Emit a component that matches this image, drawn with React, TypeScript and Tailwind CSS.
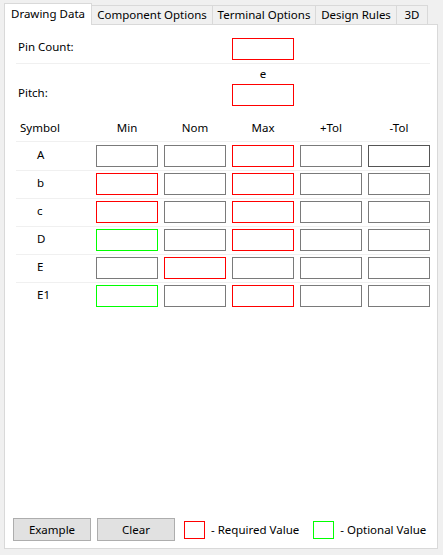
import React from 'react';

type Kind = 'n' | 'r' | 'o' | 'd';

const border: Record<Kind, string> = {
  n: 'border-[#7a7a7a]',
  r: 'border-[#ff0000]',
  o: 'border-[#00ff00]',
  d: 'border-[#555555]',
};

const rows: { sym: string; cells: Kind[] }[] = [
  { sym: 'A', cells: ['n', 'n', 'r', 'n', 'd'] },
  { sym: 'b', cells: ['r', 'n', 'r', 'n', 'n'] },
  { sym: 'c', cells: ['r', 'n', 'r', 'n', 'n'] },
  { sym: 'D', cells: ['o', 'n', 'r', 'n', 'n'] },
  { sym: 'E', cells: ['n', 'r', 'n', 'n', 'n'] },
  { sym: 'E1', cells: ['o', 'n', 'r', 'n', 'n'] },
];

const tabs = [
  { label: 'Component Options', w: 'w-[121px]' },
  { label: 'Terminal Options', w: 'w-[103px]' },
  { label: 'Design Rules', w: 'w-[81px]' },
  { label: '3D', w: 'w-[31px]' },
];

function Field({ kind }: { kind: Kind }) {
  return <div className={`h-[22px] w-[62px] border bg-white ${border[kind]}`} />;
}

// symbol column + 5 value columns, 6px apart
const grid = 'grid grid-cols-[74px_62px_62px_62px_62px_62px] gap-x-[6px]';

export default function App() {
  return (
    <div
      className="w-[443px] h-[555px] bg-[#f0f0f0] pt-[3px] pl-[4px] pr-[5px] pb-[6px] flex flex-col text-[11.5px] text-black"
      style={{ fontFamily: '"Noto Sans", "Segoe UI", sans-serif' }}
    >
      {/* Tabs */}
      <div className="flex items-end h-[22px] relative z-10 -mb-px">
        <div className="w-[88px] h-[22px] bg-white border border-b-0 border-[#d9d9d9] flex items-center justify-center pb-[2px]">
          Drawing Data
        </div>
        {tabs.map(t => (
          <div
            key={t.label}
            className={`${t.w} h-[20px] bg-[#f0f0f0] border border-l-0 border-[#d9d9d9] flex items-center justify-center`}
          >
            {t.label}
          </div>
        ))}
      </div>

      {/* Panel */}
      <div className="flex-1 bg-white border border-[#d9d9d9] flex flex-col">
        <div className="pl-[11px] pr-[7px] pt-[13px]">
          {/* Pin count */}
          <div className={`${grid} items-center`}>
            <div className="pl-[2px] -mt-[5px]">Pin Count:</div>
            <div />
            <div />
            <Field kind="r" />
          </div>
          <div className="h-[3px] border-b border-[#f0f0f0] box-content" />

          {/* Pitch */}
          <div className={`${grid} h-[20px] items-center`}>
            <div />
            <div />
            <div />
            <div className="text-center leading-[16px]">e</div>
          </div>
          <div className={`${grid} items-center`}>
            <div className="pl-[2px] -mt-[4px]">Pitch:</div>
            <div />
            <div />
            <Field kind="r" />
          </div>

          {/* Header */}
          <div className={`${grid} h-[36px] items-end pb-[5px] border-b border-[#f0f0f0] leading-[16px]`}>
            <div className="pl-[4px]">Symbol</div>
            <div className="text-center">Min</div>
            <div className="text-center">Nom</div>
            <div className="text-center">Max</div>
            <div className="text-center">+Tol</div>
            <div className="text-center">-Tol</div>
          </div>

          {/* Rows */}
          <div className="mt-[1px]">
            {rows.map((r, i) => (
              <div
                key={r.sym}
                className={`${grid} pt-[2px] pb-[3px] ${i < rows.length - 1 ? 'border-b border-[#f0f0f0]' : ''}`}
              >
                <div className="pl-[21px] leading-[20px]">{r.sym}</div>
                {r.cells.map((c, j) => (
                  <Field key={j} kind={c} />
                ))}
              </div>
            ))}
          </div>
        </div>

        {/* Footer */}
        <div className="mt-auto flex items-center pl-[8px] pb-[7px]">
          <button className="w-[78px] h-[23px] bg-[#e1e1e1] border border-[#adadad]">Example</button>
          <button className="w-[78px] h-[23px] bg-[#e1e1e1] border border-[#adadad] ml-[6px]">Clear</button>
          <div className="w-[21px] h-[18px] border border-[#ff0000] ml-[9px]" />
          <span className="ml-[6px]">- Required Value</span>
          <div className="w-[21px] h-[18px] border border-[#00ff00] ml-[14px]" />
          <span className="ml-[6px]">- Optional Value</span>
        </div>
      </div>
    </div>
  );
}
